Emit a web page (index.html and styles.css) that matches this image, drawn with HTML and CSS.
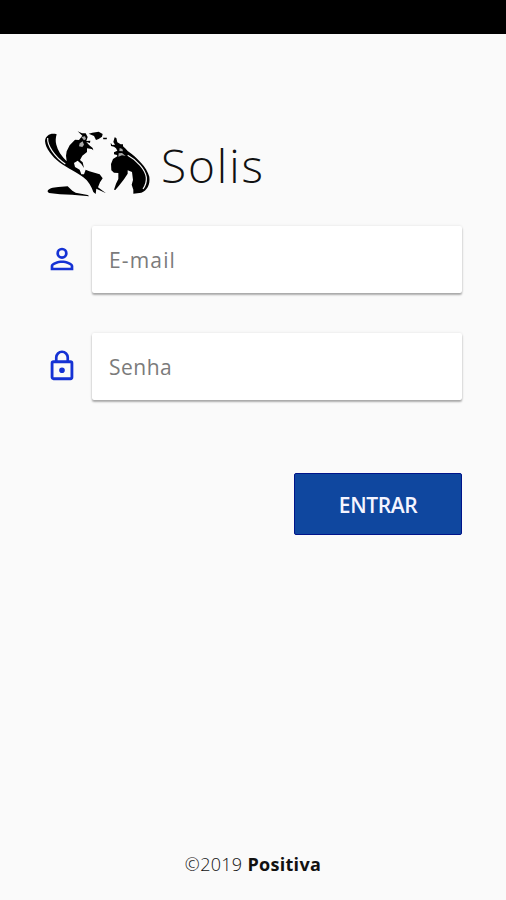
FILE: index.html
```html
<!DOCTYPE html>
<html lang="pt-BR">
<head>
<meta charset="utf-8">
<title>Solis</title>
<link rel="stylesheet" href="styles.css">
</head>
<body>
<div class="status-bar"></div>
<main class="login">
  <header class="brand">
    <svg class="globe" viewBox="0 0 360 255" aria-hidden="true">
      <path d="M50 43C32 38 17 46 15 63C16 85 37 110 58 127C84 146 111 157 130 172C145 183 155 200 160 216L167 222L169 206L198 220L174 202L180 187L188 175L179 163L148 154L137 149L132 163L124 163L119 149L105 141L102 129L113 122L124 132L132 144L128 127L120 120L127 107L141 96L141 85L155 87L160 91L158 84L148 76L139 66L150 69L151 62L139 63L143 51L137 40L126 40L113 34L127 47L117 60L105 59L89 76L80 94L78 107L80 124C64 108 53 91 49 74C46 63 47 53 50 43Z"/>
      <path class="rim" d="M23 54C21 76 44 111 76 132"/>
      <path class="paper" d="M119 70L128 64L132 74L127 81L117 79ZM124 51L135 49L138 57L132 61Z"/>
      <path d="M146 41L157 38L176 35L188 42L186 50L176 57L168 60L162 48ZM189 53L201 53L200 58L190 58Z"/>
      <path d="M224 52L229 54L232 67L242 73L249 73L249 79L257 86L263 93C290 112 321 142 328 170C331 195 321 211 304 218L280 221L280 209L275 194L279 180L276 156L263 151L263 161L252 178L238 196L226 210L222 209L228 191L235 177L235 159L222 158L214 151L213 132L219 117L232 109L231 105L222 103L222 97L232 92L228 85L222 80L213 78L212 68L217 75L225 74L220 66Z"/>
      <path class="paper" d="M239 84L247 87L249 94L238 93ZM236 100L246 99L257 108L246 106L235 110Z"/>
      <path class="rim" d="M263 106C291 121 316 149 319 172C320 187 315 199 309 207"/>
      <path d="M23 215C22 206 40 202 55 201L83 199L97 212L107 218L143 225L148 229L96 224L60 223L27 219Z"/>
    </svg>
    <h1>Solis</h1>
  </header>
  <form class="form">
    <div class="row">
      <svg class="icon" viewBox="0 0 24 24" aria-hidden="true"><path d="M12 5.9a2.1 2.1 0 1 1 0 4.2 2.1 2.1 0 0 1 0-4.2m0 9c2.97 0 6.1 1.46 6.1 2.1v1.1H5.9V17c0-.64 3.13-2.1 6.1-2.1M12 4a4 4 0 1 0 0 8 4 4 0 0 0 0-8zm0 9c-2.67 0-8 1.34-8 4v3h16v-3c0-2.66-5.33-4-8-4z"/></svg>
      <input class="email" type="text" placeholder="E-mail" aria-label="E-mail">
    </div>
    <div class="row">
      <svg class="icon" viewBox="0 0 24 24" aria-hidden="true"><path d="M12 17a2 2 0 1 0 0-4 2 2 0 0 0 0 4zm6-9h-1V6A5 5 0 0 0 7 6v2H6a2 2 0 0 0-2 2v10c0 1.1.9 2 2 2h12a2 2 0 0 0 2-2V10a2 2 0 0 0-2-2zM8.9 6a3.1 3.1 0 0 1 6.2 0v2H8.9V6zM18 20H6V10h12v10z"/></svg>
      <input class="password" type="password" placeholder="Senha" aria-label="Senha">
    </div>
    <button type="button">ENTRAR</button>
  </form>
  <footer>©2019 <strong>Positiva</strong></footer>
</main>
</body>
</html>
```
FILE: styles.css
```css
* { box-sizing: border-box; }
body {
  margin: 0;
  height: 900px;
  display: flex;
  flex-direction: column;
  background: #fafafa;
  color: #111;
  font-family: "Open Sans", "Noto Sans", sans-serif;
}
.status-bar { height: 34px; background: #000; }
.login {
  flex: 1;
  display: flex;
  flex-direction: column;
  padding: 86px 44px 0 40px;
}
.brand { display: flex; height: 85px; }
.globe { width: 120px; height: 85px; fill: #000; }
.globe .rim { fill: none; stroke: #fafafa; stroke-width: 3.5; }
.globe .paper { fill: #aaa; }
h1 {
  margin: 13px 0 0 1px;
  font-size: 46px;
  line-height: 64px;
  font-weight: 300;
  letter-spacing: 1.9px;
}
.form { display: flex; flex-direction: column; margin-top: 21px; }
.row { display: flex; align-items: center; height: 67px; margin-bottom: 40px; }
.icon { width: 34px; height: 34px; margin: 0 13px 2px 5px; fill: #1532d4; }
input {
  flex: 1;
  min-width: 0;
  height: 67px;
  padding: 1px 17px 0;
  border: 0;
  border-radius: 2px;
  background: #fff;
  box-shadow: 0 2px 2px rgba(0,0,0,.3), 0 0 3px rgba(0,0,0,.1);
  font: 400 21px "Open Sans", "Noto Sans", sans-serif;
}
input::placeholder { color: #7b7b7b; opacity: 1; }
.email { letter-spacing: 1.15px; }
.password { letter-spacing: .5px; }
button {
  align-self: flex-end;
  width: 168px;
  height: 62px;
  margin-top: 33px;
  padding: 1px 0 0;
  border: 1px solid #00148a;
  border-radius: 2px;
  background: #0f479f;
  color: #f5f5ff;
  font: 600 21px "Open Sans", "Noto Sans", sans-serif;
  letter-spacing: -.4px;
}
footer {
  margin: auto 0 22px 4px;
  text-align: center;
  font-size: 18px;
  line-height: 28px;
  font-weight: 300;
  letter-spacing: .3px;
}
strong { font-weight: 700; }
```
